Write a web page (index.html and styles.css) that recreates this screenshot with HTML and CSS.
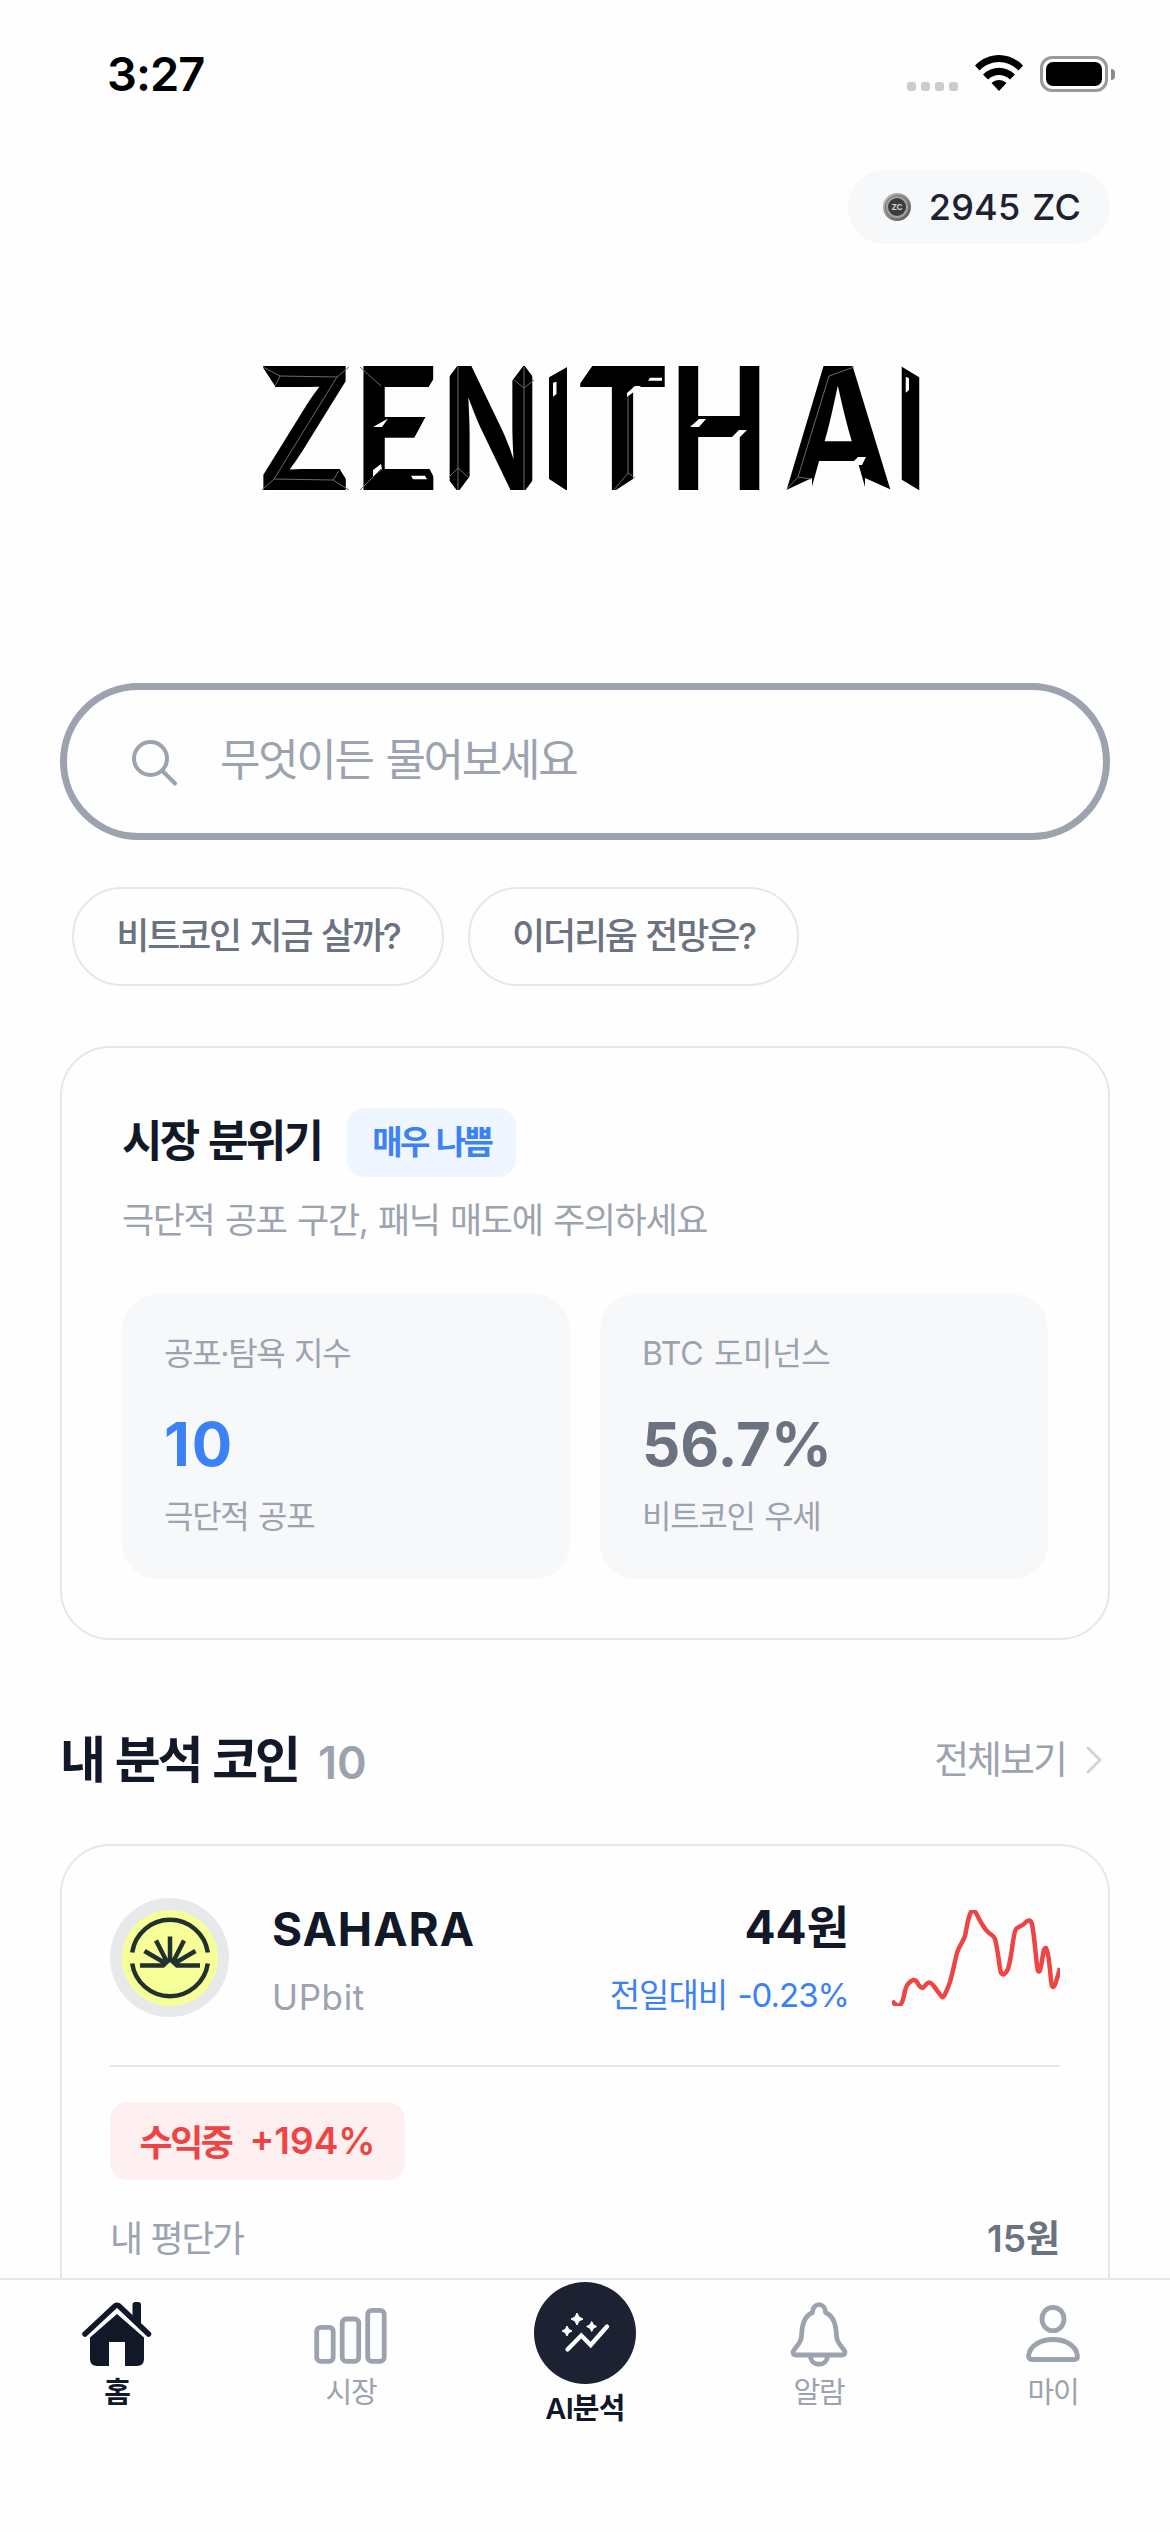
FILE: index.html
```html
<!DOCTYPE html>
<html lang="ko">
<head>
<meta charset="utf-8">
<title>ZENITH AI</title>
<link rel="stylesheet" href="styles.css">
</head>
<body>
<div class="screen">
  <header class="status">
    <span class="time">3:27</span>
    <div class="status-icons">
      <div class="signal"><i></i><i></i><i></i><i></i></div>
      <svg class="wifi" viewBox="0 0 48 36"><path d="M0 10.500C13.500-3.500 34.500-3.500 48 10.500L43.500 15.500C32.500 4 15.500 4 4.500 15.500ZM8 19.500C17 10.500 31 10.500 40 19.500L35 24.500C29 18.500 19 18.500 13 24.500ZM16.500 28C21 24 27 24 31.500 28L24 36Z"/></svg>
      <div class="battery"><div class="battery-body"><div class="battery-fill"></div></div><div class="battery-tip"></div></div>
    </div>
  </header>

  <main class="content">
    <div class="wallet-row">
      <div class="wallet">
        <svg class="coin" viewBox="0 0 28 28">
          <defs><linearGradient id="rim" x1="0" y1="0" x2="1" y2="1"><stop offset="0" stop-color="#c9c9c6"/><stop offset=".5" stop-color="#8a8a88"/><stop offset="1" stop-color="#4a4a4a"/></linearGradient></defs>
          <circle cx="14" cy="14" r="14" fill="url(#rim)"/><circle cx="14" cy="14" r="11.500" fill="#a3a3a0" stroke="#666" stroke-width=".8"/><circle cx="14" cy="14" r="9" fill="#3c3c3c"/>
          <text x="14" y="16.800" text-anchor="middle" class="coin-text">ZC</text>
        </svg>
        <span>2945 ZC</span>
      </div>
    </div>

    <svg class="logo" viewBox="0 0 660 130" role="img" aria-label="ZENITH AI">
      <text class="logo-text" y="126.300"><tspan x="-7" textLength="99" lengthAdjust="spacingAndGlyphs">Z</tspan><tspan x="92" textLength="87" lengthAdjust="spacingAndGlyphs">E</tspan><tspan x="179" textLength="100" lengthAdjust="spacingAndGlyphs">N</tspan><tspan x="279" textLength="34" lengthAdjust="spacingAndGlyphs">I</tspan><tspan x="313" textLength="95" lengthAdjust="spacingAndGlyphs">T</tspan><tspan x="408" textLength="98" lengthAdjust="spacingAndGlyphs">H</tspan><tspan x="521" textLength="111" lengthAdjust="spacingAndGlyphs">A</tspan><tspan x="632" textLength="33" lengthAdjust="spacingAndGlyphs">I</tspan></text>
      <g class="logo-cut">
        <path d="M-4 2L0 2L13 22V26H-4ZM77 104L92 128V104Z"/>
        <path d="M180 1V24H166ZM164 52L150 78H182V52ZM167 104H181V126L179 127ZM111 63L126 54.500L120 63ZM111 113V106L119 100L120 105ZM149 111.700H163L165 115.300H151Z"/>
        <path d="M184 1H196L184 17ZM184 112L196 128H184ZM208 112L196 128H208ZM250 17L262 1H250ZM274 17L262 1H274ZM274 112L262 128H274Z"/>
        <path d="M284 15V1H307V2ZM284 113L307 128H284ZM291 18.700L294.500 17.700V30L291 32.700Z"/>
        <path d="M315 24V1H331ZM386 16.700L388 13.700H400V16.700ZM351 128L374 113V128ZM365 33V29L373 22H379L373 27Z"/>
        <path d="M428 63L437 55H444L437 63ZM469 74L477 66H485L477 74Z"/>
        <path d="M520 128L550 114V128ZM603 114L632 127V128H603ZM588 101L596 93H604L600 101Z"/>
        <path d="M637 1L660 15V1ZM637 114L660 128H637ZM643.700 12.700L647 14.300V26L643.700 28.700Z"/>
      </g>
      <g class="logo-facet">
        <path d="M1 3L18 12L13 22M18 12L75 13L87 3M75 13L12 115L71 116L77 107M71 116L87 126M12 115L0 126"/>
        <path d="M98 3L119 22M98 126L119 105M196 3V126M187 113L196 104L206 113M262 3V126M252 16L262 24L272 16"/>
        <path d="M366 33V109L352 126M366 109L373 114M592 3L567 12L536 113L525 125M536 113L549 115"/>
      </g>
    </svg>

    <div class="search">
      <svg class="search-icon" viewBox="0 0 46 46"><circle cx="18.500" cy="18.500" r="16.500"/><path d="M30.500 31L43 43.500"/></svg>
      <span>무엇이든 물어보세요</span>
    </div>

    <div class="chips">
      <span class="chip">비트코인 지금 살까?</span>
      <span class="chip chip-b">이더리움 전망은?</span>
    </div>

    <section class="mood">
      <div class="mood-head"><h2>시장 분위기</h2><span class="mood-tag">매우 나쁨</span></div>
      <p class="mood-sub">극단적 공포 구간, 패닉 매도에 주의하세요</p>
      <div class="stats">
        <div class="stat"><span class="stat-label">공포·탐욕 지수</span><strong class="stat-value blue">10</strong><span class="stat-note">극단적 공포</span></div>
        <div class="stat"><span class="stat-label wide">BTC 도미넌스</span><strong class="stat-value">56.7%</strong><span class="stat-note">비트코인 우세</span></div>
      </div>
    </section>

    <div class="list-head">
      <h2>내 분석 코인</h2><span class="count">10</span>
      <span class="all">전체보기</span>
      <svg class="chevron" viewBox="0 0 16 28"><path d="M2 2L14 14L2 26"/></svg>
    </div>

    <section class="coin-card">
      <div class="coin-top">
        <div class="avatar">
          <svg viewBox="0 0 96 96">
            <circle cx="48" cy="48" r="48" fill="#f6ff98"/>
            <g fill="none" stroke="#22302f" stroke-width="4.500">
              <path d="M10.200 42.500A38.200 38.200 0 0 1 85.800 42.500M10.200 53.500A38.200 38.200 0 0 0 85.800 53.500"/>
              <path d="M18 55.500H41L48 49L55 55.500H78M48 26.500V52M34 30.500L45 52M62 30.500L51 52M22.500 41L43 53M73.500 41L53 53"/>
            </g>
          </svg>
        </div>
        <div class="coin-name"><strong>SAHARA</strong><span>UPbit</span></div>
        <div class="coin-price"><strong>44원</strong><span>전일대비 -0.23%</span></div>
        <svg class="spark" viewBox="0 0 168 96"><path d="M0 91C4 96 7 97 9 94C13 88 12 78 16 74Q22 67 25 72Q29 80 32 77C36 72 37 71 41 75C45 80 48 85 50 87C52 89 56 77 58 72C61 62 63 50 65 43C68 34 71 32 73 26C75 17 76 7 79 2Q81-1 84 3C88 11 92 18 95 21C98 25 102 25 103 29C106 40 107 55 109 63Q112 67 116 59C120 47 121 23 124 19C127 16 131 16 134 12Q138 8 140 14C143 29 144 53 146 61Q148 63 149 56C151 48 151 37 154 38C158 45 158 69 160 76Q162 79 164 72L168 58"/></svg>
      </div>
      <div class="profit"><span class="profit-label">수익중</span><span>+194%</span></div>
      <div class="avg"><span>내 평단가</span><strong>15원</strong></div>
    </section>
  </main>

  <nav class="tabs">
    <div class="tab active">
      <svg class="ic-home" viewBox="0 0 72 66"><path d="M9 35.500L36 12L63 35.500V57Q63 64 56 64H44V40H28V64H16Q9 64 9 57Z"/><path d="M51.500 18V3Q51.500 0 54.500 0H57Q60 0 60 3V27Z"/><path class="roof" d="M4 32L34 4Q36 2.500 38 4L67.500 32"/></svg>
      <span>홈</span>
    </div>
    <div class="tab">
      <svg class="ic-bars" viewBox="0 0 74 66"><rect x="2.700" y="25.300" width="16.500" height="34" rx="4"/><rect x="28.200" y="17" width="16.500" height="42.300" rx="4"/><rect x="53.700" y="8.300" width="16.500" height="51" rx="4"/></svg>
      <span>시장</span>
    </div>
    <div class="tab main">
      <div class="orb"><svg viewBox="0 0 48 48"><path class="line" d="M6.500 40.500L20.300 26.500L29.700 36L46 17.500"/><path d="M16 4L18 8L22 10L18 12L16 16L14 12L10 10L14 8ZM30.700 12.500L32.400 15.800L35.700 17.500L32.400 19.200L30.700 22.500L29 19.200L25.700 17.500L29 15.800ZM6 17L7.700 20.300L11 22L7.700 23.700L6 27L4.300 23.700L1 22L4.300 20.300Z"/></svg></div>
      <span>AI분석</span>
    </div>
    <div class="tab">
      <svg class="ic-bell" viewBox="0 0 60 66"><path d="M23.500 10.500C23.500 0 36.500 0 36.500 10.500C44 14 47 21 47.500 34C47.700 42 55 46 56 50Q56 53 53 53H7Q4 53 4 50C5 46 12.300 42 12.500 34C13 21 16 14 23.500 10.500Z"/><path d="M21.500 54C22 65 38 65 38.500 54"/></svg>
      <span>알람</span>
    </div>
    <div class="tab">
      <svg class="ic-user" viewBox="0 0 60 66"><ellipse cx="30" cy="17" rx="11" ry="11.700"/><path d="M5.500 54C8 32 52 32 54.500 54Q54.500 57.500 51 57.500H9Q5.500 57.500 5.500 54Z"/></svg>
      <span>마이</span>
    </div>
  </nav>
</div>
</body>
</html>
```
FILE: styles.css
```css
* { box-sizing: border-box; margin: 0; padding: 0; }
body { width: 1170px; height: 2532px; overflow: hidden; background: #fff; color: #111827; font-family: Inter, "Noto Sans CJK KR", sans-serif; }
svg { display: block; overflow: visible; }
.screen { display: flex; flex-direction: column; height: 2532px; background: #fefefe; }
h2, strong { font-weight: 700; }
span, h2, strong, p { white-space: nowrap; word-spacing: .06em; }

.status { display: flex; justify-content: space-between; height: 170px; padding: 44px 55px 0 107px; flex: none; }
.time { font-size: 47px; font-weight: 600; line-height: 60px; letter-spacing: -1px; color: #000; }
.status-icons { display: flex; align-items: flex-start; padding-top: 11px; }
.signal { display: flex; gap: 5px; margin: 27px 17px 0 0; }
.signal i { width: 9px; height: 9px; border-radius: 3px; background: #ccc; }
.wifi { width: 48px; height: 36px; margin-right: 17px; }
.battery { display: flex; align-items: center; gap: 3px; margin-top: 1px; }
.battery-body { width: 68px; height: 36px; padding: 3px; border: 3px solid #9a9a9a; border-radius: 12px; }
.battery-fill { height: 24px; border-radius: 7px; background: #000; }
.battery-tip { width: 4px; height: 11px; background: #8a8a8a; border-radius: 0 5px 5px 0; }

.content { display: flex; flex-direction: column; height: 2108px; padding: 0 60px; overflow: hidden; flex: none; }
.content > * { flex: none; }
.wallet-row { display: flex; justify-content: flex-end; }
.wallet { display: flex; align-items: center; justify-content: space-between; width: 262px; height: 74px; padding: 0 29px 0 35px; border-radius: 37px; background: #f7f8fa; font-size: 36px; font-weight: 500; letter-spacing: .2px; color: #1b2232; }
.coin { width: 28px; height: 28px; }
.coin-text { font: 700 8px Inter, sans-serif; letter-spacing: 0; fill: #d4d4d4; }

.logo { width: 660px; height: 130px; margin: 120px 0 0 202px; }
.logo-text { font: 700 170px Inter, sans-serif; fill: #000; }
.logo-cut { fill: #fefefe; }
.logo-facet { fill: none; stroke: #6a6a6a; stroke-width: 1; }

.search { display: flex; align-items: center; width: 1050px; height: 157px; margin-top: 189px; padding-left: 65px; border: 7px solid #9ca3af; border-radius: 79px; font-size: 44px; letter-spacing: -2.3px; color: #9ca3af; }
.search span { margin-bottom: 10px; }
.search-icon { width: 46px; height: 46px; margin: 2px 42px 0 0; fill: none; stroke: #9ca3af; stroke-width: 4; stroke-linecap: round; }

.chips { display: flex; gap: 24px; margin: 47px 0 0 12px; }
.chip { display: flex; align-items: center; justify-content: center; width: 372px; height: 99px; padding-bottom: 7px; border: 2px solid #e5e7eb; border-radius: 50px; font-size: 36px; font-weight: 500; letter-spacing: -2.2px; color: #6b7280; }
.chip-b { width: 331px; }

.mood { height: 594px; margin-top: 60px; padding: 59px 60px; border: 2px solid #e5e7eb; border-radius: 50px; }
.mood-head { display: flex; align-items: center; gap: 26px; height: 70px; }
.mood-head h2 { margin-bottom: 8px; font-size: 44px; letter-spacing: -2.7px; }
.mood-tag { display: flex; align-items: center; justify-content: center; width: 169px; height: 69px; padding-bottom: 5px; border-radius: 18px; background: #eff6ff; font-size: 33px; font-weight: 600; letter-spacing: -2.5px; color: #3b82f6; }
.mood-sub { margin-top: 16px; font-size: 35px; line-height: 54px; letter-spacing: -1.4px; color: #9ca3af; }
.stats { display: grid; grid-template-columns: 1fr 1fr; gap: 30px; margin-top: 47px; }
.stat { display: flex; flex-direction: column; height: 285px; padding: 36px 42px; border-radius: 36px; background: #f7f8fa; color: #9ca3af; }
.stat-label, .stat-note { font-size: 32px; line-height: 48px; letter-spacing: -1.3px; }
.stat-label.wide { letter-spacing: -.3px; }
.stat-value { margin: 27px 0 10px; font-size: 60px; line-height: 78px; color: #6b7280; }
.stat-value.blue { letter-spacing: 2px; color: #3b82f6; }

.list-head { display: flex; align-items: center; height: 80px; margin-top: 80px; padding-right: 8px; }
.list-head h2 { margin-bottom: 8px; font-size: 50px; letter-spacing: -3.1px; }
.count { margin: 4px 0 0 20px; font-size: 45px; font-weight: 600; color: #9ca3af; }
.all { margin: 0 0 8px auto; font-size: 38px; letter-spacing: -2px; color: #9ca3af; }
.chevron { width: 16px; height: 28px; margin-left: 20px; fill: none; stroke: #d1d5db; stroke-width: 3; stroke-linecap: round; stroke-linejoin: round; }

.coin-card { height: 520px; margin-top: 44px; padding: 52px 48px; border: 2px solid #e5e7eb; border-radius: 50px; }
.coin-top { display: flex; height: 169px; border-bottom: 2px solid #e5e7eb; }
.avatar { display: flex; align-items: center; justify-content: center; width: 119px; height: 119px; border-radius: 50%; background: #e7e9eb; }
.avatar svg { width: 96px; height: 96px; }
.coin-name { display: flex; flex-direction: column; margin-left: 43px; }
.coin-name strong, .coin-price strong { font-size: 46px; line-height: 62px; }
.coin-name strong { letter-spacing: 1px; }
.coin-name span { margin-top: 13px; font-size: 35px; line-height: 48px; letter-spacing: .6px; color: #9ca3af; }
.coin-price { display: flex; flex-direction: column; align-items: flex-end; margin-left: auto; }
.coin-price strong { margin-top: -2px; }
.coin-price span { margin-top: 13px; font-size: 33px; line-height: 48px; color: #3b82f6; letter-spacing: -1px; }
.spark { width: 168px; height: 96px; margin: 12px 0 0 43px; fill: none; stroke: #ef4444; stroke-width: 4.500; stroke-linejoin: round; overflow: hidden; }
.profit { display: flex; align-items: center; justify-content: center; gap: 18px; width: 295px; height: 78px; margin-top: 35px; padding-bottom: 2px; border-radius: 18px; background: #feeff0; font-size: 37px; font-weight: 600; color: #ef4444; }
.profit-label { font-size: 36px; letter-spacing: -2.5px; }
.avg { display: flex; align-items: center; justify-content: space-between; height: 54px; margin-top: 29px; font-size: 36px; letter-spacing: -2.4px; color: #9ca3af; }
.avg strong { font-size: 37px; font-weight: 600; letter-spacing: 0; color: #6b7280; }

.tabs { display: grid; grid-template-columns: repeat(5, 1fr); height: 254px; border-top: 2px solid #e5e7eb; background: #fefefe; flex: none; }
.tab { display: flex; flex-direction: column; align-items: center; padding-top: 22px; color: #9ca3af; font-size: 29px; letter-spacing: -1.3px; }
.tab span { line-height: 44px; margin-top: 3px; }
.tab.active, .tab.main { color: #111827; font-weight: 600; }
.tab svg { height: 66px; fill: none; stroke: #9ca3af; stroke-width: 4.800; stroke-linejoin: round; }
.tab .ic-home { width: 72px; fill: #111827; stroke: none; }
.tab .ic-home .roof { fill: none; stroke: #111827; stroke-width: 5.500; stroke-linecap: round; }
.ic-bars { width: 74px; }
.ic-bell, .ic-user { width: 60px; }
.tab.main { padding-top: 2px; letter-spacing: -.8px; }
.orb { display: flex; align-items: center; justify-content: center; width: 102px; height: 102px; border-radius: 50%; background: #1c2231; }
.tab .orb svg { width: 48px; height: 48px; fill: #fff; stroke: #fff; stroke-width: 1; }
.tab .orb .line { fill: none; stroke-width: 4.300; stroke-linecap: round; stroke-linejoin: miter; }
.tab.main span { margin-top: 3px; }
```
